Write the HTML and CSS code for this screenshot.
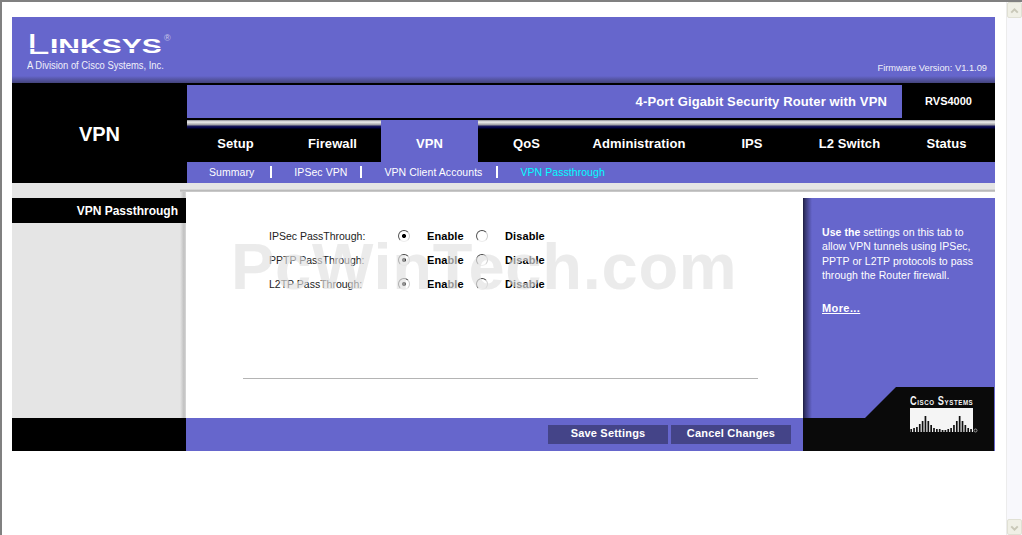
FILE: index.html
```html
<!DOCTYPE html>
<html lang="en">
<head>
<meta charset="utf-8">
<title>VPN Passthrough</title>
<link rel="stylesheet" href="styles.css">
</head>
<body>
<div class="window">
  <div class="viewport">
    <div class="page">
      <header class="top">
        <div class="logo">
          <div class="wordmark"><span class="big">L</span><span class="rest">INKSYS</span><sup class="reg">®</sup></div>
          <div class="tagline">A Division of Cisco Systems, Inc.</div>
        </div>
        <div class="firmware">Firmware Version: V1.1.09</div>
      </header>
      <section class="hero">
        <h1 class="section-title">VPN</h1>
        <div class="hero-right">
          <div class="product">
            <div class="product-name">4-Port Gigabit Security Router with VPN</div>
            <div class="model">RVS4000</div>
          </div>
          <nav class="tabs">
            <a class="tab">Setup</a>
            <a class="tab">Firewall</a>
            <a class="tab active">VPN</a>
            <a class="tab">QoS</a>
            <a class="tab">Administration</a>
            <a class="tab">IPS</a>
            <a class="tab">L2 Switch</a>
            <a class="tab">Status</a>
          </nav>
          <nav class="subnav">
            <a class="sub first">Summary</a>
            <a class="sub second">IPSec VPN</a>
            <a class="sub">VPN Client Accounts</a>
            <a class="sub current">VPN Passthrough</a>
          </nav>
        </div>
      </section>
      <div class="band"></div>
      <section class="main">
        <aside class="left"><div class="left-title">VPN Passthrough</div></aside>
        <div class="content">
          <div class="form">
            <label class="name">IPSec PassThrough:</label>
            <input class="radio" type="radio" name="ipsec" checked><span class="opt">Enable</span>
            <input class="radio" type="radio" name="ipsec"><span class="opt">Disable</span>
            <label class="name">PPTP PassThrough:</label>
            <input class="radio" type="radio" name="pptp" checked><span class="opt">Enable</span>
            <input class="radio" type="radio" name="pptp"><span class="opt">Disable</span>
            <label class="name">L2TP PassThrough:</label>
            <input class="radio" type="radio" name="l2tp" checked><span class="opt">Enable</span>
            <input class="radio" type="radio" name="l2tp"><span class="opt">Disable</span>
          </div>
          <div class="rule"></div>
          <div class="watermark">PcWinTech.com</div>
        </div>
        <aside class="help">
          <p class="help-text"><b>Use the</b> settings on this tab to allow VPN tunnels using IPSec, PPTP or L2TP protocols to pass through the Router firewall.</p>
          <a class="more">More...</a>
        </aside>
      </section>
      <footer class="foot">
        <div class="foot-left"></div>
        <div class="actions">
          <button class="btn">Save Settings</button>
          <button class="btn">Cancel Changes</button>
        </div>
        <div class="foot-right">
          <svg class="notch" width="192" height="31" viewBox="0 0 192 31"><polygon points="62,31 93,0 191,0 191,31" fill="#0a0a0a"/></svg>
          <div class="cisco">
            <div class="cisco-name">Cisco Systems</div>
            <svg class="cisco-bars" width="69" height="26" viewBox="0 0 69 26">
              <rect x="0" y="0" width="63" height="24" fill="#f5f5f5"/>
              <path d="M1.200 24v-3M4.050 24v-4M6.900 24v-5M9.750 24v-8M12.600 24v-11M15.450 24v-16M18.300 24v-11M21.150 24v-7M24 24v-4M26.850 24v-3M29.700 24v-3M32.550 24v-2M35.400 24v-2M38.250 24v-3M41.100 24v-4M43.950 24v-7M46.800 24v-11M49.650 24v-16M52.500 24v-11M55.350 24v-7M58.200 24v-4M61.050 24v-3" stroke="#111" stroke-width="1.700" fill="none"/>
              <circle cx="65.500" cy="22.500" r="1.500" fill="none" stroke="#999" stroke-width="1"/>
            </svg>
          </div>
        </div>
      </footer>
    </div>
  </div>
  <div class="scrollbar">
    <div class="sb-btn"><svg width="16" height="16" viewBox="0 0 16 16"><path d="M4 10l4-4 4 4" fill="none" stroke="#c9c8b8" stroke-width="2.500"/></svg></div>
    <div class="sb-btn"><svg width="16" height="16" viewBox="0 0 16 16"><path d="M4 6l4 4 4-4" fill="none" stroke="#c9c8b8" stroke-width="2.500"/></svg></div>
  </div>
</div>
</body>
</html>
```
FILE: styles.css
```css
* { box-sizing: border-box; }
html, body { margin: 0; height: 100%; overflow: hidden; background: #fff; }
body { font-family: "Liberation Sans", Arial, sans-serif; font-size: 11px; color: #000; }

.window { display: flex; width: 1022px; height: 535px; border-top: 2px solid #808080; border-left: 2px solid #808080; }
.viewport { flex: 1; padding: 15px 0 0 10px; }
.page { width: 983px; display: flex; flex-direction: column; }

/* header */
.top { height: 66px; background: linear-gradient(#6666cc 0, #6666cc 59px, #5c5cb4 61px, #44447c 66px); display: flex; justify-content: space-between; padding: 0 8px 0 15px; }
.logo { color: #fff; padding-top: 16px; }
.wordmark { position: relative; display: flex; align-items: flex-end; height: 21px; width: 143px; white-space: nowrap; }
.wordmark::after { content: ""; position: absolute; left: 0; right: 8px; top: 15px; height: 1px; background: #6666cc; }
.big { font-size: 30px; line-height: 21px; height: 21px; font-weight: 400; width: 23px; transform: scaleX(1.35); transform-origin: left; }
.rest { font-size: 21px; line-height: 17px; height: 17px; font-weight: 700; width: 113px; transform: scaleX(1.43); transform-origin: left; }
.reg { position: absolute; left: 137px; top: 0; font-size: 9px; color: #c8c8e8; line-height: 10px; }
.tagline { font-size: 10px; line-height: 12px; margin-top: 6px; color: #f0f0fa; transform: scaleX(.94); transform-origin: left; white-space: nowrap; }
.firmware { align-self: flex-end; font-size: 9.300px; line-height: 12px; padding-bottom: 9px; color: #f0f0fa; }

/* hero */
.hero { display: flex; background: #000; height: 100px; }
.section-title { width: 175px; margin: 0; padding-top: 39px; color: #fff; font-size: 20px; line-height: 24px; font-weight: 700; text-align: center; }
.hero-right { flex: 1; padding-top: 2px; display: flex; flex-direction: column; }
.product { display: flex; height: 33px; }
.product-name { width: 715px; background: #6666cc; color: #fff; text-align: right; padding-right: 15px; font-size: 13px; letter-spacing: .13px; font-weight: 700; line-height: 33px; }
.model { flex: 1; text-align: center; color: #fff; font-weight: 700; font-size: 11px; line-height: 33px; }
.tabs { margin-top: 2px; height: 42px; display: grid; grid-template-columns: 97px 97px 97px 97px 128px 98px 97px 97px; background: linear-gradient(#8a8a94 0, #f0f0f0 2px, #9a9aa0 5px, #1a1a5e 6px, #000040 8px, #000 9px); }
.tab { color: #fff; font-size: 13px; letter-spacing: .08px; font-weight: 700; text-align: center; line-height: 16px; padding-top: 16px; }
.tab.active { background: #6666cc; }
.subnav { height: 21px; background: #6666cc; display: flex; align-items: center; padding: 0 0 2px 22px; }
.sub { color: #fff; font-size: 10.500px; letter-spacing: .06px; line-height: 12px; padding-right: 14px; margin-right: 22px; border-right: 2px solid #fff; white-space: nowrap; }
.sub.first { padding-right: 16px; }
.sub.second { padding-right: 13px; }
.sub.current { color: #00ffff; border-right: 0; }

/* band */
.band { height: 9px; background: linear-gradient(#e5e5e5, #e5e5e5) left / 168px 100% no-repeat, linear-gradient(#e5e5e5 0, #e5e5e5 6px, #c4c4c4 7px, #b0b0b0 8px, #e0e0e0 9px); }

/* main */
.main { display: flex; height: 226px; }
.left { width: 174px; padding-top: 6px; background: linear-gradient(to right, #e5e5e5 0, #e5e5e5 168px, #c0c0c0 172px, #d8d8d8 174px); }
.left-title { height: 25px; background: #000; color: #fff; font-weight: 700; font-size: 12px; line-height: 27px; text-align: right; padding-right: 8px; }
.content { width: 617px; background: #fff; position: relative; padding: 32px 0 0 83px; }
.form { display: grid; grid-template-columns: 129px 29px 49px 29px auto; grid-auto-rows: 24px; align-items: center; }
.name { font-size: 10.500px; color: #222; }
.opt { font-size: 11px; font-weight: 700; letter-spacing: .1px; }
.radio { appearance: none; -webkit-appearance: none; margin: 0; width: 12px; height: 12px; border-radius: 50%; border: 1px solid; border-color: #444 #ccc #eee #555; background: #fff; }
.radio:checked { background: radial-gradient(circle, #000 0, #000 1.800px, #fff 2.300px); }
.rule { position: absolute; left: 57px; top: 186px; width: 515px; height: 1px; background: #b4b4b4; }
.watermark { position: absolute; left: 45px; top: 40px; font-size: 65px; line-height: 70px; font-weight: 700; color: rgba(225, 225, 225, .65); letter-spacing: .75px; white-space: nowrap; pointer-events: none; }

/* help */
.help { width: 192px; margin-top: 6px; background: linear-gradient(to right, #1c1c40 0, #34346c 2px, #5050a4 6px, #6666cc 9px); color: #fff; padding: 27px 12px 0 19px; }
.help-text { margin: 0; font-size: 10.500px; letter-spacing: .05px; line-height: 14.300px; }
.more { display: inline-block; margin-top: 20px; font-size: 11px; letter-spacing: .4px; font-weight: 700; text-decoration: underline; }

/* footer */
.foot { display: flex; height: 33px; }
.foot-left { width: 174px; background: #000; }
.actions { width: 617px; background: #6666cc; display: flex; justify-content: flex-end; gap: 3px; padding: 7px 12px 0 0; }
.btn { width: 120px; height: 19px; border: 0; padding: 0 0 2px; background: #444488; color: #fff; font: 700 11px/17px "Liberation Sans", Arial, sans-serif; letter-spacing: .2px; }
.foot-right { width: 192px; background: #0a0a0a; border-right: 1px solid #6666cc; position: relative; }
.notch { position: absolute; left: 0; bottom: 33px; }
.cisco { position: absolute; left: 107px; top: -22px; color: #fff; }
.cisco-name { font-size: 12px; line-height: 10px; font-weight: 700; font-variant: small-caps; white-space: nowrap; transform: scaleX(.77); transform-origin: left; width: 80px; letter-spacing: .75px; margin-bottom: 2px; color: #f4f4f4; }
.cisco-bars { display: block; }

/* scrollbar */
.scrollbar { width: 16px; background: #f8f8fc; border-left: 1px solid #ececec; display: flex; flex-direction: column; justify-content: space-between; height: 533px; }
.sb-btn { height: 16px; background: #f0f0e6; border: 1px solid #e0e0d4; border-radius: 2px; display: flex; }
```
